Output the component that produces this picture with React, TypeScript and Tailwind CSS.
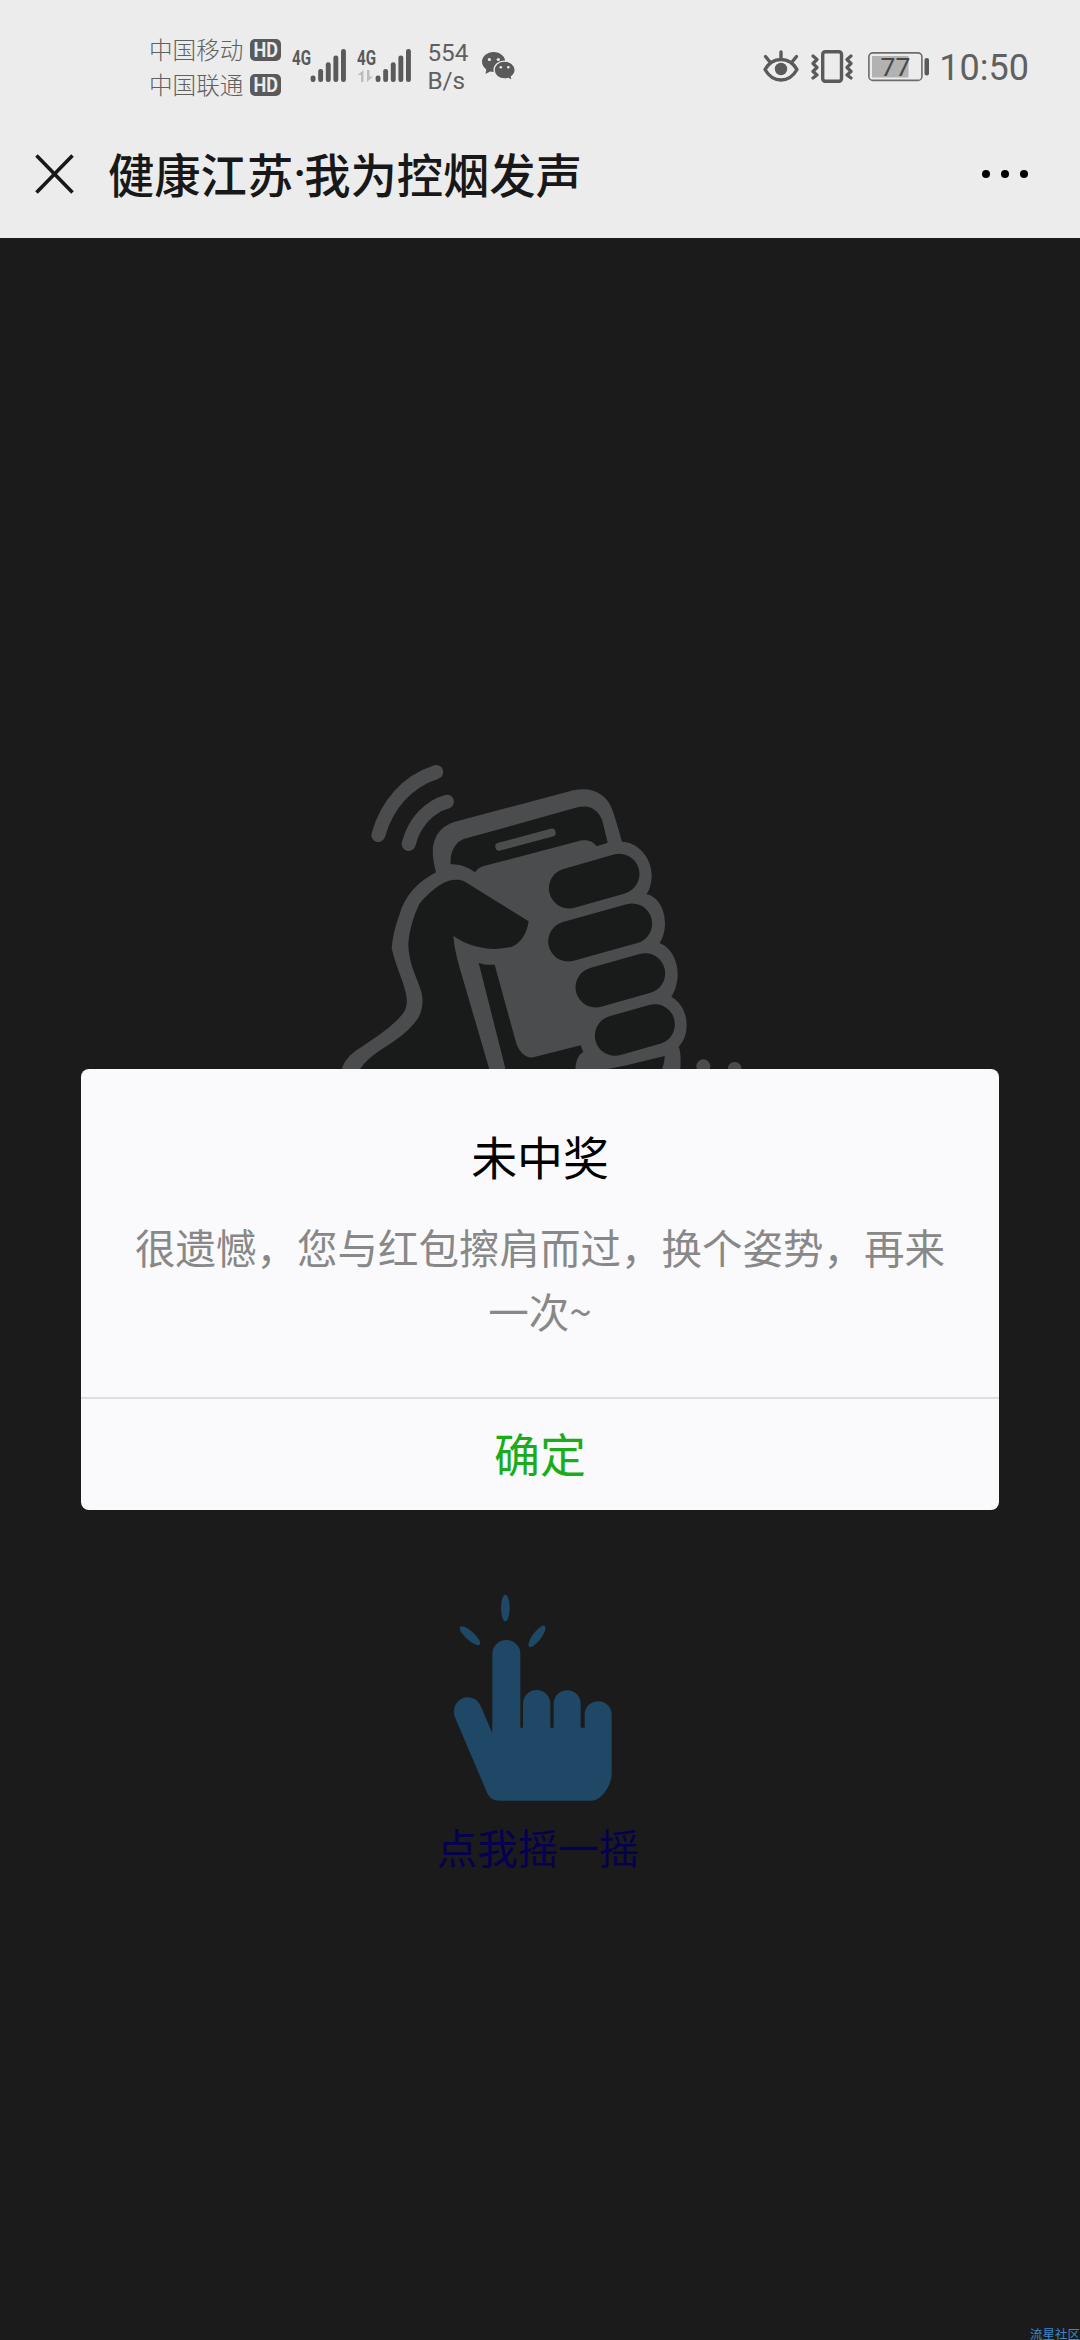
import React from "react";

const SignalBars: React.FC<{ data?: boolean }> = ({ data }) => (
  <svg width="56" height="40" viewBox="0 0 56 40" fill="#5a5a5a">
    <text x="0" y="20.5" fontSize="21" fontWeight="700" textLength="19" lengthAdjust="spacingAndGlyphs">
      4G
    </text>
    {data && (
      <path
        d="M6.5 26v12H4v-7H0.5zM10 26h2.5v6.5H16L10 38z"
        fill="#bdbdbd"
      />
    )}
    {[31.5, 25, 18.2, 11.5, 5].map((top, i) => (
      <rect key={top} x={18.6 + i * 7.6} y={top} width="4.9" height={38 - top} rx="2.3" />
    ))}
  </svg>
);

const HdBadge: React.FC = () => (
  <svg width="31" height="22" viewBox="0 0 31 22">
    <rect width="31" height="22" rx="5" fill="#5a5a5a" />
    <text x="3.5" y="18" fontSize="20" fontWeight="700" fill="#ececec" textLength="24.5" lengthAdjust="spacingAndGlyphs">
      HD
    </text>
  </svg>
);

const WechatIcon: React.FC = () => (
  <svg width="34" height="29" viewBox="0 0 34 29" fill="#5a5a5a">
    <path d="M11.7 0C5.2 0 0 4.3 0 9.8c0 3.2 1.7 5.8 4.3 7.6L3.5 22l4.6-2.6c1.2.3 2.4.5 3.6.5 6.4 0 11.6-4.5 11.6-10S18.1 0 11.7 0z" />
    <path
      d="M22.5 9.2c-6 0-10.4 4-10.4 8.9s4.600 8.900 10.400 8.900c1.400 0 2.600-.2 3.800-.6l4 2.400-.9-4c2.200-1.600 3.800-4 3.800-6.700 0-4.900-4.900-8.900-10.700-8.900z"
      stroke="#ececec"
      strokeWidth="1.3"
    />
    <g fill="#ececec">
      <circle cx="7.4" cy="7.5" r="1.6" />
      <circle cx="16.3" cy="7.5" r="1.6" />
      <circle cx="18.8" cy="15.2" r="1.3" />
      <circle cx="26.3" cy="15.2" r="1.3" />
    </g>
  </svg>
);

const EyeIcon: React.FC = () => (
  <svg width="36" height="32" viewBox="0 0 36 32" fill="none" stroke="#5a5a5a" strokeWidth="3.4" strokeLinecap="round">
    <path d="M2 19.500C6 12.500 11.500 9.500 18 9.500s12 3 16 10c-4 7-9.500 10.500-16 10.500S6 26.500 2 19.500z" strokeLinejoin="round" />
    <path d="M18 2v7M2.500 6.500l4.500 5.500M33.500 6.500L29 12" />
    <circle cx="18" cy="19" r="6.2" fill="#5a5a5a" stroke="none" />
  </svg>
);

const VibrateIcon: React.FC = () => (
  <svg width="42" height="33" viewBox="0 0 42 33" fill="none" stroke="#5a5a5a" strokeLinejoin="round" strokeLinecap="round">
    <rect x="11.7" y="1.7" width="18.8" height="29.6" rx="2.5" strokeWidth="3.4" />
    <path d="M2 6l4 3.500-4 4 4 4-4 4 4 3.500L2 28M40 6l-4 3.500 4 4-4 4 4 4-4 3.500 4 3" strokeWidth="3.2" />
  </svg>
);

const BatteryIcon: React.FC = () => (
  <svg width="62" height="30" viewBox="0 0 62 30">
    <rect x=".9" y=".9" width="53" height="27.5" rx="4" fill="none" stroke="#6c6c6c" strokeWidth="1.6" />
    <rect x="4" y="4" width="36.5" height="21.5" fill="#b2b2b2" />
    <rect x="56.5" y="6" width="4.5" height="17.5" rx="2" fill="#5a5a5a" />
    <text x="12.5" y="24" fontSize="26.5" fill="#484848">
      77
    </text>
  </svg>
);

const StatusBar: React.FC = () => (
  <div className="flex h-[110px] items-start pl-[149px] pr-[51px] pt-[32px] font-['Roboto',sans-serif] text-[#606060]">
    <div className="flex flex-col font-['Noto_Sans_CJK_SC',sans-serif] text-[23.6px] font-light leading-[35px]">
      {["中国移动", "中国联通"].map((name) => (
        <div key={name} className="flex items-center gap-[7px]">
          <span>{name}</span>
          <span className="font-['Roboto',sans-serif]"><HdBadge /></span>
        </div>
      ))}
    </div>
    <div className="ml-[11px] mt-[12px] flex gap-[9px]">
      <SignalBars />
      <SignalBars data />
    </div>
    <div className="ml-[14px] mt-[7px] text-[24.3px] leading-[28px]">
      <div>554</div>
      <div>B/s</div>
    </div>
    <div className="ml-[14px] mt-[20px]">
      <WechatIcon />
    </div>
    <div className="ml-auto mt-[18px] flex items-start">
      <EyeIcon />
      <div className="ml-[12px]"><VibrateIcon /></div>
      <div className="ml-[15px] mt-[2px]"><BatteryIcon /></div>
      <span className="ml-[9px] mt-[-3px] text-[36px] leading-[42px]">10:50</span>
    </div>
  </div>
);

const TitleBar: React.FC = () => (
  <div className="flex h-[128px] items-center pl-[35px] pr-[52px]">
    <svg width="39" height="40" viewBox="0 0 39 40" stroke="#181818" strokeWidth="3.6" className="-mt-[1px]">
      <path d="M1.500 1.500l36 37M37.500 1.500l-36 37" />
    </svg>
    <h1 className="-mt-[3px] ml-[34px] flex text-[46.3px] font-medium leading-[60px] text-[#181818]">
      <span>健康江苏</span>
      <span className="w-[11px] text-center font-['Roboto',sans-serif]">·</span>
      <span>我为控烟发声</span>
    </h1>
    <div className="ml-auto flex gap-[11px]">
      <i className="size-[8px] rounded-full bg-black" />
      <i className="size-[8px] rounded-full bg-black" />
      <i className="size-[8px] rounded-full bg-black" />
    </div>
  </div>
);

const ShakePhone: React.FC = () => (
  <svg width="420" height="333" viewBox="0 0 1260 999">
    <g fill="none" stroke="#4b4c4e" strokeWidth="42" strokeLinecap="round">
      <path d="M145 255C170 165 230 95 319 66" />
      <path d="M236 282C252 220 295 170 351 155" />
    </g>
    <path
      fill="#4b4c4e"
      d="M30 999C32 940 50 918 100 887C150 855 190 825 215 795C228 780 232 765 230 745C225 700 200 660 185 595C188 560 195 530 208 495C225 435 265 395 318 367C310 340 307 310 309 290C315 250 340 225 375 215L730 121C790 108 830 135 845 175C855 200 866 240 876 275C920 275 965 320 965 375C965 400 958 420 950 433C985 440 1005 480 1005 520C1005 545 998 565 989 580C1020 590 1043 630 1043 670C1043 700 1035 725 1024 740C1050 755 1070 785 1070 825C1070 855 1060 875 1046 890C1054 910 1053 940 1048 999Z"
    />
    <g fill="#191b1a">
      <path d="M70 999C90 940 130 915 160 895C200 870 240 840 262 808C280 780 280 750 274 725C262 685 235 640 235 582C238 540 250 500 268 462C285 440 310 418 330 405C355 388 385 385 405 395L596 514C592 545 575 580 545 590C490 605 425 595 370 558C372 590 380 620 388 650L490 999Z" />
      <path d="M362 343C360 320 365 300 378 284C390 270 405 265 420 262L745 171C790 162 810 190 818 215L833 278L800 289C790 275 775 268 750 272L470 346C450 350 442 358 435 367C415 352 390 342 362 343Z" />
      <path d="M446 638C460 644 478 645 494 644L556 870C565 905 585 925 610 922L752 886L760 906C745 915 733 930 736 999L537 999Z" />
      <path d="M822 999L824 958C850 955 870 950 890 946L1004 918C1004 935 1000 950 992 965L985 999Z" />
    </g>
    <path d="M508 290L665 248" stroke="#4b4c4e" strokeWidth="24" strokeLinecap="round" />
    <g stroke="#191b1a" strokeWidth="121" strokeLinecap="round">
      <path d="M717 415L868 372" />
      <path d="M715 574L906 521" />
      <path d="M797 712L945 670" />
      <path d="M855 857L974 823" />
    </g>
    <g fill="#4b4c4e">
      <circle cx="1120" cy="949" r="21" />
      <circle cx="1214" cy="957" r="21" />
    </g>
  </svg>
);

const TapHand: React.FC = () => (
  <svg width="240" height="233" viewBox="0 0 720 699" fill="#1f4866">
    <ellipse cx="256" cy="84" rx="13" ry="40" />
    <ellipse cx="150" cy="167" rx="40" ry="13" transform="rotate(42 150 167)" />
    <ellipse cx="351" cy="169" rx="39" ry="13" transform="rotate(-53 351 169)" />
    <path d="M217 460V222a42 42 0 0 1 84 0V443h8V371a41 41 0 0 1 82 0V443h10V371a40.500 40.500 0 0 1 81 0V443h12V404a40.500 40.500 0 0 1 81 0V582C575 615 545 662 515 662H240C220 662 210 655 203 642L106 415C92 380 117 352 142 352C162 352 176 363 183 380Z" />
  </svg>
);

const ResultDialog: React.FC = () => (
  <div className="absolute left-[81px] top-[1069px] flex w-[918px] flex-col overflow-hidden rounded-[8px] bg-[#fafafc] text-center">
    <div className="h-[328px] px-[50px] pt-[52px]">
      <h2 className="text-[45.9px] leading-[68px] text-black">未中奖</h2>
      <p className="mt-[26px] text-[40.5px] leading-[63.5px] text-[#888]">
        很遗憾，您与红包擦肩而过，换个姿势，再来一次~
      </p>
    </div>
    <button className="h-[113px] border-t-2 border-[#dfdfe1] pb-[4px] text-[45.9px] leading-[107px] text-[#1aad19]">
      确定
    </button>
  </div>
);

export default function App() {
  return (
    <div className="relative flex h-[2340px] w-[1080px] flex-col overflow-hidden bg-[#1b1b1b] font-['Noto_Sans_CJK_SC',sans-serif]">
      <header className="h-[238px] bg-[#ececec]">
        <StatusBar />
        <TitleBar />
      </header>
      <main className="flex flex-col items-center pt-[512px]">
        <ShakePhone />
        <a className="mt-[497px] flex flex-col items-center text-[40.5px] leading-[60px] text-[#05004f]">
          <TapHand />
          <span className="mr-[4px] mt-[4px]">点我摇一摇</span>
        </a>
      </main>
      <ResultDialog />
      <div className="absolute bottom-0 right-0 text-[12.5px] leading-[12px] text-[#3d88c8]">流星社区</div>
    </div>
  );
}
